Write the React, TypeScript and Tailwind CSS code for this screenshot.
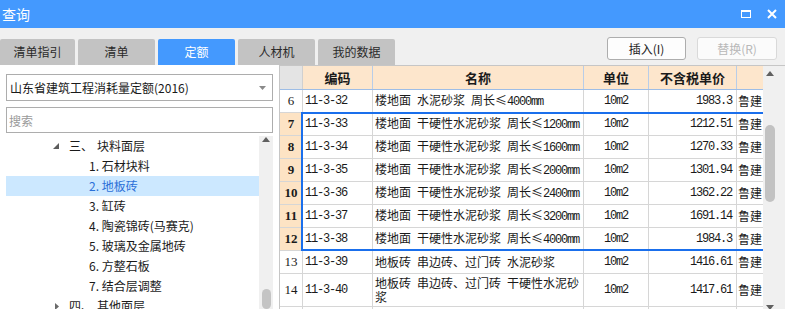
import React from 'react';

interface Row {
  no: number;
  code: string;
  name: string;
  size?: string;
  name2?: string;
  price: string;
  selected?: boolean;
}

const sp = '\u2002';

const rows: Row[] = [
  { no: 6, code: '11-3-32', name: `楼地面${sp}水泥砂浆${sp}周长≤`, size: '4000mm', price: '1983.3' },
  { no: 7, code: '11-3-33', name: `楼地面${sp}干硬性水泥砂浆${sp}周长≤`, size: '1200mm', price: '1212.51', selected: true },
  { no: 8, code: '11-3-34', name: `楼地面${sp}干硬性水泥砂浆${sp}周长≤`, size: '1600mm', price: '1270.33', selected: true },
  { no: 9, code: '11-3-35', name: `楼地面${sp}干硬性水泥砂浆${sp}周长≤`, size: '2000mm', price: '1301.94', selected: true },
  { no: 10, code: '11-3-36', name: `楼地面${sp}干硬性水泥砂浆${sp}周长≤`, size: '2400mm', price: '1362.22', selected: true },
  { no: 11, code: '11-3-37', name: `楼地面${sp}干硬性水泥砂浆${sp}周长≤`, size: '3200mm', price: '1691.14', selected: true },
  { no: 12, code: '11-3-38', name: `楼地面${sp}干硬性水泥砂浆${sp}周长≤`, size: '4000mm', price: '1984.3', selected: true },
  { no: 13, code: '11-3-39', name: `地板砖${sp}串边砖、过门砖${sp}水泥砂浆`, price: '1416.61' },
  { no: 14, code: '11-3-40', name: `地板砖${sp}串边砖、过门砖${sp}干硬性水泥砂`, name2: '浆', price: '1417.61' },
];

const tabs = ['清单指引', '清单', '定额', '人材机', '我的数据'];

const children = ['石材块料', '地板砖', '缸砖', '陶瓷锦砖(马赛克)', '玻璃及金属地砖', '方整石板', '结合层调整'];

const mono = "font-['Liberation_Mono','Noto_Sans_CJK_SC',monospace] text-[12px] tracking-[-1.2px]";

function UpArrow() {
  return (
    <svg width="8" height="5" viewBox="0 0 8 5">
      <polygon points="0,5 4,0 8,5" fill="#606060" />
    </svg>
  );
}

function DownArrow() {
  return (
    <svg width="8" height="5" viewBox="0 0 8 5">
      <polygon points="0,0 8,0 4,5" fill="#606060" />
    </svg>
  );
}

export default function App() {
  return (
    <div className="w-[785px] h-[309px] overflow-hidden bg-[#f0f0f0] font-['Noto_Sans_CJK_SC',sans-serif] text-[12px] text-[#1a1a1a] flex flex-col">
      {/* Title bar */}
      <div className="h-[28px] shrink-0 bg-[#4499fe] flex items-center justify-between pl-[2px] pr-[8px] text-white">
        <span className="text-[14px] leading-none">查询</span>
        <div className="flex items-center gap-[16px]">
          <svg width="10" height="8" viewBox="0 0 10 8">
            <rect x="0.5" y="1" width="9" height="6.5" fill="none" stroke="#fff" strokeWidth="1" />
            <rect x="0" y="0" width="10" height="2" fill="#fff" />
          </svg>
          <svg width="10" height="10" viewBox="0 0 10 10">
            <path d="M1 1L9 9M9 1L1 9" stroke="#fff" strokeWidth="2" />
          </svg>
        </div>
      </div>

      {/* Tabs + buttons */}
      <div className="h-[37px] shrink-0 flex items-end justify-between pr-[8px]">
        <div className="flex gap-[3px]">
          {tabs.map((t, i) => (
            <div
              key={t}
              className={
                'h-[26px] flex items-center justify-center rounded-t-[2px] ' +
                (i === 0 ? 'w-[75px] ' : 'w-[77px] ') +
                (i === 2 ? 'bg-[#4499fe] text-white' : 'bg-[#c3c3c3] text-[#2a2a2a]')
              }
            >
              {t}
            </div>
          ))}
        </div>
        <div className="self-start mt-[9px] flex gap-[11px]">
          <button className="w-[79px] h-[23px] bg-[#fdfdfd] border border-[#adadad] rounded-[3px] text-[#222] flex items-center justify-center">
            插入(I)
          </button>
          <button className="w-[80px] h-[23px] bg-[#fbfbfb] border border-[#d9d9d9] rounded-[3px] text-[#b8b8b8] flex items-center justify-center">
            替换(R)
          </button>
        </div>
      </div>

      {/* Main */}
      <div className="flex-1 min-h-0 flex">
        {/* Left panel */}
        <div className="w-[279px] shrink-0 bg-white flex flex-col px-[6px]">
          <div className="mt-[9px] h-[27px] shrink-0 border border-[#adadad] flex items-center justify-between pl-[3px] pr-[6px]">
            <span>山东省建筑工程消耗量定额(2016)</span>
            <svg width="7" height="4" viewBox="0 0 7 4">
              <polygon points="0,0 7,0 3.5,4" fill="#8a8a8a" />
            </svg>
          </div>
          <input
            placeholder="搜索"
            className="mt-[6px] h-[26px] shrink-0 border border-[#adadad] pl-[2px] outline-none placeholder-[#9a9a9a]"
          />
          <div className="mt-[3px] flex-1 min-h-0 flex overflow-hidden">
            <div className="flex-1">
              <div className="h-[20px] flex items-center pl-[47px]">
                <span className="w-[16px] flex">
                  <svg width="6" height="6" viewBox="0 0 6 6">
                    <polygon points="6,0 6,6 0,6" fill="#5c5c5c" />
                  </svg>
                </span>
                <span className="w-[28px]">三、</span>
                <span>块料面层</span>
              </div>
              {children.map((c, i) => (
                <div
                  key={c}
                  className={
                    'h-[20px] flex items-center pl-[83px] ' +
                    (i === 1 ? 'bg-[#cce8ff] text-[#2b70d8]' : '')
                  }
                >
                  {i + 1}. {c}
                </div>
              ))}
              <div className="h-[20px] flex items-center pl-[49px]">
                <span className="w-[14px] flex">
                  <svg width="4" height="7" viewBox="0 0 4 7">
                    <polygon points="0,0 4,3.5 0,7" fill="#6a6a6a" />
                  </svg>
                </span>
                <span className="w-[28px]">四、</span>
                <span>其他面层</span>
              </div>
            </div>
            <div className="w-[14px] shrink-0 bg-[#f0f0f0] flex flex-col items-center">
              <div className="h-[12px] flex items-center">
                <UpArrow />
              </div>
              <div className="mt-[147px] w-[9px] h-[40px] rounded-[5px] bg-[#c4c4c4]" />
            </div>
          </div>
        </div>

        {/* Table */}
        <div className="flex-1 flex border-t border-[#c6c6c6] bg-white">
          <div className="relative w-[484px] shrink-0 border-l border-[#c6c6c6] overflow-hidden">
            {/* header */}
            <div className="h-[24px] flex border-b border-[#9dbde6] font-bold text-[13px] text-[#1a1a1a]">
              <div className="w-[23px] bg-[#e4e4e4] border-r border-[#d0d0d0]" />
              <div className="w-[70px] bg-[#fde6cc] border-r border-[#b8cde8] flex items-center justify-center">编码</div>
              <div className="w-[211px] bg-[#fde6cc] border-r border-[#b8cde8] flex items-center justify-center">名称</div>
              <div className="w-[65px] bg-[#fde6cc] border-r border-[#b8cde8] flex items-center justify-center">单位</div>
              <div className="w-[88px] bg-[#fde6cc] border-r border-[#b8cde8] flex items-center justify-center">不含税单价</div>
              <div className="w-[26px] bg-[#fde6cc]" />
            </div>
            {rows.map((r) => (
              <div
                key={r.no}
                className={(r.name2 ? 'h-[33px] ' : 'h-[23px] ') + 'flex border-b border-[#d6d6d6]'}
              >
                <div
                  className={
                    "w-[23px] border-r border-[#d6d6d6] flex items-center justify-center font-['Liberation_Serif',serif] text-[13px] " +
                    (r.selected ? 'bg-[#fde3c4] font-bold' : 'bg-white')
                  }
                >
                  {r.no}
                </div>
                <div className={'w-[70px] border-r border-[#d6d6d6] flex items-center pl-[2px] ' + mono}>{r.code}</div>
                <div className="w-[211px] border-r border-[#d6d6d6] flex flex-col justify-center pl-[2px] whitespace-pre overflow-hidden leading-[14px]">
                  <div>
                    {r.name}
                    {r.size && <span className={mono}>{r.size}</span>}
                  </div>
                  {r.name2 && <div>{r.name2}</div>}
                </div>
                <div className={'w-[65px] border-r border-[#d6d6d6] flex items-center justify-center ' + mono}>10m2</div>
                <div className={'w-[88px] border-r border-[#d6d6d6] flex items-center justify-end pr-[4px] ' + mono}>{r.price}</div>
                <div className="w-[26px] flex items-center pl-[1px] whitespace-nowrap overflow-hidden text-[12px]">鲁建</div>
              </div>
            ))}
            <div className="h-[23px] flex">
              <div className="w-[23px] border-r border-[#d6d6d6]" />
              <div className="w-[70px] border-r border-[#d6d6d6]" />
              <div className="w-[211px] border-r border-[#d6d6d6]" />
              <div className="w-[65px] border-r border-[#d6d6d6]" />
              <div className="w-[88px] border-r border-[#d6d6d6]" />
            </div>
            {/* selection frame */}
            <div className="absolute left-[21px] top-[46px] w-[475px] h-[139px] border-2 border-[#1a6fec] pointer-events-none" />
          </div>
          <div className="w-[14px] shrink-0 bg-[#f0f0f0] flex flex-col items-center overflow-hidden">
            <div className="h-[14px] shrink-0 flex items-center">
              <UpArrow />
            </div>
            <div className="mt-[45px] shrink-0 w-[10px] h-[77px] rounded-[5px] bg-[#c2c2c2]" />
            <div className="mt-[98px] h-[14px] shrink-0 flex items-center">
              <DownArrow />
            </div>
          </div>
          <div className="flex-1 bg-[#f0f0f0]" />
        </div>
      </div>
    </div>
  );
}
